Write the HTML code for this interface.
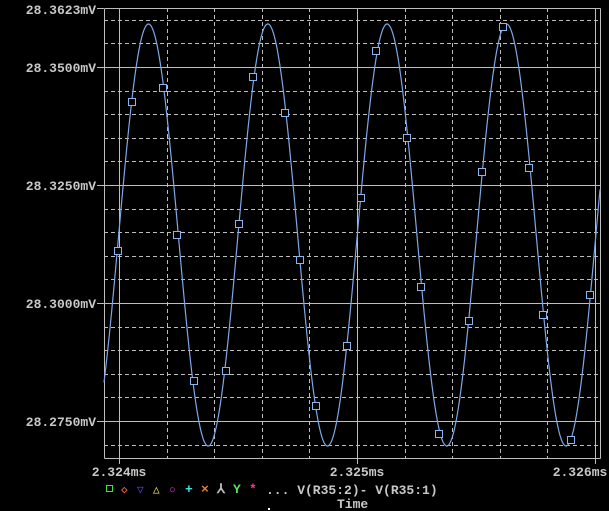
<!DOCTYPE html>
<html><head><style>
html,body{margin:0;padding:0;background:#000;width:609px;height:511px;overflow:hidden}
svg{display:block}
text{font-family:"Liberation Mono",monospace;font-size:13px;fill:#c8c8c8;font-weight:bold}
</style></head><body>
<svg id="s" width="609" height="511" viewBox="0 0 609 511">
<rect width="609" height="511" fill="#000"/>
<g id="grid" stroke="#bdbdbd" stroke-width="1" fill="none"></g>
<g id="plot"></g>
<text x="96" y="14" text-anchor="end">28.3623mV</text>
<text x="96" y="72" text-anchor="end">28.3500mV</text>
<text x="96" y="190" text-anchor="end">28.3250mV</text>
<text x="96" y="308" text-anchor="end">28.3000mV</text>
<text x="96" y="426" text-anchor="end">28.2750mV</text>
<text x="119" y="476" text-anchor="middle">2.324ms</text>
<text x="357" y="476" text-anchor="middle">2.325ms</text>
<text x="580" y="476" text-anchor="middle">2.326ms</text>
<g font-size="12">
<rect x="106.5" y="485.5" width="6" height="6" fill="none" stroke="#40e040"/>
<text x="121" y="493" style="fill:#ff6a3a;font-size:11px">◇</text>
<text x="137" y="493" style="fill:#6050ff;font-size:11px">▽</text>
<text x="153" y="493" style="fill:#ffff40;font-size:11px">△</text>
<text x="169" y="493" style="fill:#e040e0;font-size:11px">○</text>
<text x="185" y="493" style="fill:#40e0e0">+</text>
<text x="201" y="493" style="fill:#e08030">×</text>
<text x="217" y="493" style="fill:#c0c0c0">⅄</text>
<text x="233" y="493" style="fill:#60e060">Y</text>
<text x="249" y="493" style="fill:#ff3090">*</text>
</g>
<text x="266" y="494">... V(R35:2)- V(R35:1)</text>
<text x="337" y="508">Time</text>
<rect x="268" y="508" width="2" height="2" fill="#fff"/>
</svg>
<script>
var g=document.getElementById('grid'),p=document.getElementById('plot'),ns="http://www.w3.org/2000/svg";
function L(x1,y1,x2,y2,d){var l=document.createElementNS(ns,'line');l.setAttribute('x1',x1);l.setAttribute('y1',y1);l.setAttribute('x2',x2);l.setAttribute('y2',y2);if(d)l.setAttribute('stroke-dasharray','4,3');g.appendChild(l);}
var T=8,B=458,Lf=104,R=600;
L(Lf+.5,T+.5,R+.5,T+.5);L(Lf+.5,B+.5,R+.5,B+.5);L(Lf+.5,T+.5,Lf+.5,B+.5);L(R+.5,T+.5,R+.5,B+.5);
[67,185,303,421].forEach(function(y){L(Lf,y+.5,R,y+.5);L(97,y+.5,Lf,y+.5);});
L(97,8.5,Lf,8.5);
for(var k=-2;k<25;k++){var y=67-2*23.6+k*23.6;if(y<=T+2||y>=B-2)continue;if(Math.abs((y-67)/118-Math.round((y-67)/118))<0.01)continue;L(Lf,Math.round(y)+.5,R,Math.round(y)+.5,1);}
[119,357,595].forEach(function(x){L(x+.5,T,x+.5,B);L(x+.5,B,x+.5,464);});
for(var k=0;k<12;k++){var x=119+k*47.6;if(k%5==0)continue;if(x>=R)continue;L(Math.round(x)+.5,T,Math.round(x)+.5,B,1);}
var d="";for(var x=Lf;x<=R;x+=0.5){var y=235-211*Math.cos(2*Math.PI*(x-148.5)/119.3);d+=(x==Lf?"M":"L")+x.toFixed(1)+" "+y.toFixed(1);}
var pa=document.createElementNS(ns,'path');pa.setAttribute('d',d);pa.setAttribute('fill','none');pa.setAttribute('stroke','#7ea8e6');pa.setAttribute('stroke-width','1.2');p.appendChild(pa);
[[118,251],[132,102],[163,88],[177,235],[194,381],[226,371],[239,224],[253,77],[285,113],[300,260],[316,406],[347,346],[361,198],[376,51],[407,138],[421,287],[439,434],[469,321],[482,172],[503,27],[529,168],[543,315],[571,440],[590,295]].forEach(function(q){var r=document.createElementNS(ns,'rect');r.setAttribute('x',q[0]-3.5);r.setAttribute('y',q[1]-3.5);r.setAttribute('width',7);r.setAttribute('height',7);r.setAttribute('fill','#000');r.setAttribute('stroke','#8ab4ee');p.appendChild(r);});
</script>
</body></html>
